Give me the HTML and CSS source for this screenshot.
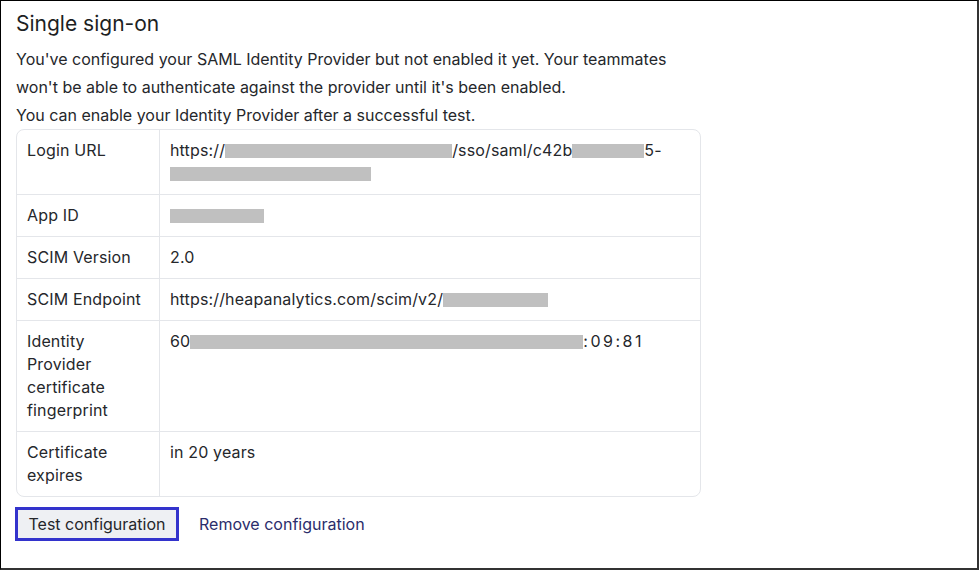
FILE: index.html
```html
<!DOCTYPE html>
<html lang="en">
<head>
<meta charset="utf-8">
<title>Single sign-on</title>
<link rel="stylesheet" href="styles.css">
</head>
<body>
<div class="frame">
  <h1 class="title">Single sign-on</h1>
  <p class="intro">You've configured your SAML Identity Provider but not enabled it yet. Your teammates won't be able to authenticate against the provider until it's been enabled.<br>You can enable your Identity Provider after a successful test.</p>
  <div class="table">
    <div class="row">
      <div class="label">Login URL</div>
      <div class="value">https://<span class="redact" style="width:227px"></span>/sso/saml/c42b<span class="redact" style="width:72px"></span>5-<br><span class="redact" style="width:201px"></span></div>
    </div>
    <div class="row">
      <div class="label">App ID</div>
      <div class="value"><span class="redact" style="width:94px"></span></div>
    </div>
    <div class="row">
      <div class="label">SCIM Version</div>
      <div class="value">2.0</div>
    </div>
    <div class="row">
      <div class="label">SCIM Endpoint</div>
      <div class="value">https://heapanalytics.com/scim/v2/<span class="redact" style="width:105px"></span></div>
    </div>
    <div class="row">
      <div class="label">Identity<br>Provider<br>certificate<br>fingerprint</div>
      <div class="value">60<span class="redact" style="width:393px"></span><span class="digits">:09:81</span></div>
    </div>
    <div class="row">
      <div class="label">Certificate<br>expires</div>
      <div class="value">in 20 years</div>
    </div>
  </div>
  <div class="actions">
    <button class="btn-test" type="button">Test configuration</button>
    <a class="link-remove" href="#">Remove configuration</a>
  </div>
</div>
</body>
</html>
```
FILE: styles.css
```css
* { box-sizing: border-box; }
html, body { margin: 0; padding: 0; background: #fff; }
body {
  font-family: Inter, "Liberation Sans", sans-serif;
  color: #25272b;
  font-size: 16px;
}
.frame {
  width: 979px;
  height: 570px;
  border-top: 1px solid #000;
  border-left: 1px solid #000;
  border-right: 2px solid #333;
  border-bottom: 2px solid #333;
  padding: 9px 0 0 15px;
}
.title {
  margin: 0 0 7px 0;
  font-size: 21px;
  font-weight: 400;
  line-height: 28px;
  color: #1d1f23;
}
.intro {
  margin: 0;
  width: 684px;
  line-height: 28px;
}
.table {
  width: 685px;
  border: 1px solid #e4e6ea;
  border-radius: 8px;
  overflow: hidden;
  letter-spacing: 0.15px;
}
.row {
  display: grid;
  grid-template-columns: 143px 1fr;
  border-top: 1px solid #e4e6ea;
}
.row:first-child { border-top: 0; }
.label, .value {
  padding: 9px 10px 9px 10px;
  line-height: 23px;
}
.label { border-right: 1px solid #e4e6ea; }
.redact {
  display: inline-block;
  height: 14px;
  background: #c0c0c0;
  vertical-align: -2px;
}
.redact + .redact { margin-left: 0; }
.digits { letter-spacing: 2.5px; }
.actions {
  display: flex;
  align-items: center;
  gap: 20px;
  margin-top: 10px;
}
.btn-test {
  font: inherit;
  color: #25272b;
  background: #eef0f3;
  border: 3px solid #3333cc;
  padding: 3px 10px;
  line-height: 22px;
  width: 164px;
  height: 34px;
  margin-left: -1px;
}
.link-remove {
  color: #2b2d6b;
  text-decoration: none;
}
```
